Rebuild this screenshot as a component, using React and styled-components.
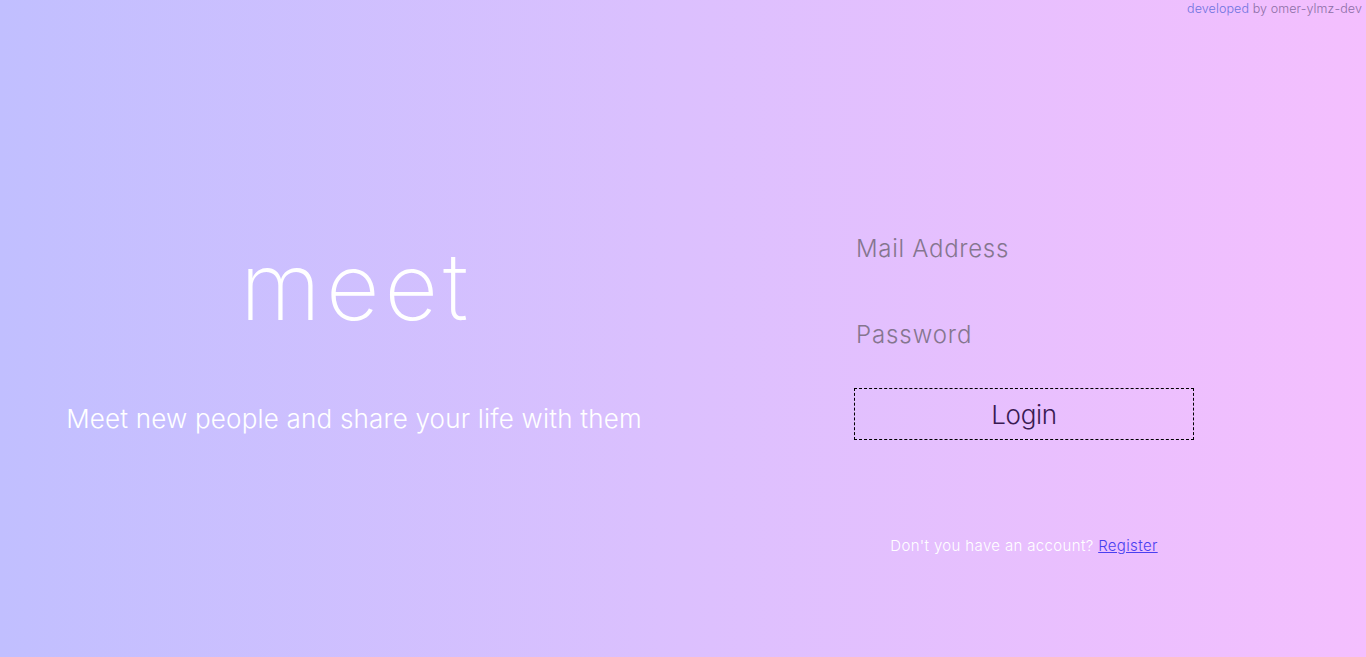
import React from 'react';
import styled, { createGlobalStyle } from 'styled-components';

const GlobalStyle = createGlobalStyle`
  html, body {
    margin: 0;
    padding: 0;
  }
  body {
    font-family: "Inter", "Liberation Sans", sans-serif;
    font-weight: 300;
  }
  * {
    box-sizing: border-box;
  }
`;

const Page = styled.div`
  position: relative;
  width: 100%;
  height: 657px;
  overflow: hidden;
  background: linear-gradient(90deg, #c1bfff 0%, #dcc0fe 50%, #f4bffe 100%);
  display: grid;
  grid-template-columns: 708px 1fr;
`;

const Credit = styled.div`
  position: absolute;
  top: 1px;
  right: 4px;
  font-size: 12.5px;
  letter-spacing: 0.1px;
  color: #8d6fa6;
`;

const CreditLink = styled.span`
  color: #6f73e0;
`;

const Brand = styled.section`
  display: flex;
  flex-direction: column;
  align-items: center;
  padding-top: 221px;
`;

const Logo = styled.h1`
  margin: 0;
  padding-left: 5px;
  font-size: 93px;
  font-weight: 200;
  line-height: 130px;
  letter-spacing: 5px;
  color: #ffffff;
`;

const Tagline = styled.p`
  margin: 50px 0 0;
  font-size: 26px;
  font-weight: 300;
  line-height: 36px;
  letter-spacing: 0.2px;
  color: #ffffff;
`;

const Form = styled.form`
  display: flex;
  flex-direction: column;
  align-items: center;
  padding: 223px 26px 0 0;
`;

const Field = styled.input`
  width: 340px;
  height: 50px;
  margin: 0 0 36px;
  padding: 0 2px;
  border: none;
  outline: none;
  background: transparent;
  font-family: inherit;
  font-weight: 300;
  font-size: 24px;
  letter-spacing: ${(p) => p.$spacing || '0.7px'};
  color: #5a4a6e;
  &::placeholder {
    color: #85768f;
  }
  &:last-of-type {
    margin-bottom: 29px;
  }
`;

const LoginButton = styled.button`
  width: 340px;
  height: 52px;
  border: 1px dashed #000;
  background: transparent;
  font-family: inherit;
  font-weight: 300;
  font-size: 26px;
  letter-spacing: -0.3px;
  color: #3a1a52;
  cursor: pointer;
`;

const Footer = styled.p`
  margin: 96px 0 0;
  font-size: 15px;
  line-height: 20px;
  letter-spacing: 0.35px;
  color: #ffffff;
`;

const RegisterLink = styled.a`
  color: #4a3ff0;
  text-decoration: underline;
`;

export default function App() {
  return (
    <>
      <GlobalStyle />
      <Page>
        <Credit>
          <CreditLink>developed</CreditLink> by omer-ylmz-dev
        </Credit>
        <Brand>
          <Logo>meet</Logo>
          <Tagline>Meet new people and share your life with them</Tagline>
        </Brand>
        <Form onSubmit={(e) => e.preventDefault()}>
          <Field type="email" placeholder="Mail Address" />
          <Field type="password" placeholder="Password" $spacing="0.9px" />
          <LoginButton type="submit">Login</LoginButton>
          <Footer>
            Don't you have an account? <RegisterLink href="#">Register</RegisterLink>
          </Footer>
        </Form>
      </Page>
    </>
  );
}
